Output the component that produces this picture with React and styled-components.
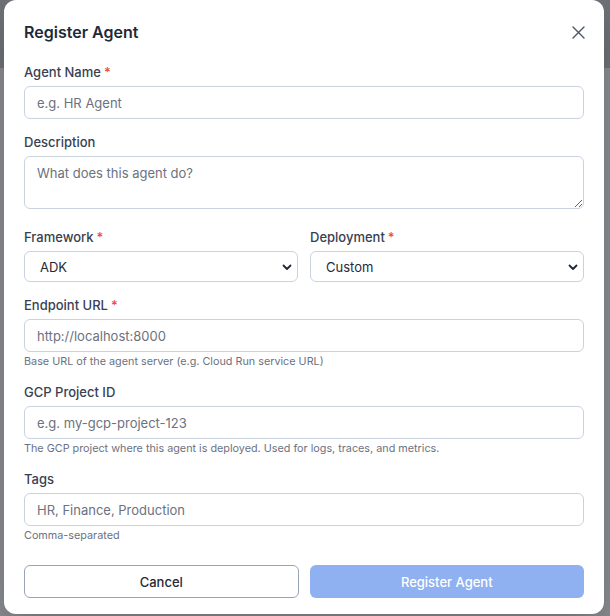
import React from "react";
import styled, { createGlobalStyle } from "styled-components";

const GlobalStyle = createGlobalStyle`
  * { box-sizing: border-box; }
  html, body { margin: 0; padding: 0; }
  body {
    font-family: Inter, "Noto Sans", "Liberation Sans", sans-serif;
    -webkit-font-smoothing: antialiased;
    overflow: hidden;
  }
`;

const Backdrop = styled.div`
  position: fixed;
  inset: 0;
  background: linear-gradient(to bottom, #6e7176 0, #6e7176 68px, #8a8d91 68px);
  display: flex;
  align-items: flex-start;
  padding-left: 4px;
`;

const Modal = styled.div`
  width: 600px;
  background: #ffffff;
  border-radius: 12px;
  box-shadow: 0 20px 40px rgba(0, 0, 0, 0.2);
  padding: 20px 20px 16px;
`;

const Header = styled.div`
  display: flex;
  align-items: center;
  justify-content: space-between;
  height: 24px;
  margin-bottom: 20px;
`;

const Title = styled.h2`
  margin: 0;
  font-size: 16px;
  line-height: 24px;
  font-weight: 600;
  color: #1f2937;
`;

const CloseButton = styled.button`
  border: 0;
  background: none;
  padding: 0;
  margin-right: -1px;
  width: 13px;
  height: 13px;
  display: flex;
  color: #4b5563;
  cursor: pointer;
`;

const Form = styled.form`
  display: flex;
  flex-direction: column;
  gap: 15px;
`;

const Row = styled.div`
  display: grid;
  grid-template-columns: 1fr 1fr;
  gap: 12px;
`;

const Field = styled.div`
  display: flex;
  flex-direction: column;
  min-width: 0;
`;

const Label = styled.label`
  font-size: 13px;
  line-height: 16px;
  font-weight: 500;
  color: #374151;
  margin-bottom: 6px;
`;

const Required = styled.span`
  color: #ef4444;
  margin-left: 3px;
`;

const Input = styled.input`
  display: block;
  width: 100%;
  height: 33px;
  border: 1px solid #c9d3e0;
  border-radius: 6px;
  padding: 0 12px;
  font-family: inherit;
  font-size: 13px;
  color: #1f2937;
  background: #fff;
  outline: none;
  &::placeholder { color: #6b7280; }
`;

const TextArea = styled.textarea`
  display: block;
  width: 100%;
  height: 53px;
  border: 1px solid #c9d3e0;
  border-radius: 6px;
  padding: 7px 12px;
  font-family: inherit;
  font-size: 13px;
  line-height: 18px;
  color: #1f2937;
  margin-bottom: 5px;
  resize: vertical;
  outline: none;
  &::placeholder { color: #6b7280; }
`;

const SelectWrap = styled.div`
  position: relative;
`;

const Select = styled.select`
  display: block;
  width: 100%;
  height: 31px;
  appearance: none;
  -webkit-appearance: none;
  border: 1px solid #c9d3e0;
  border-radius: 6px;
  padding: 0 30px 0 15px;
  font-family: inherit;
  font-size: 13px;
  color: #1f2937;
  background: #fff;
  outline: none;
`;

const Chevron = styled.svg`
  position: absolute;
  right: 5px;
  top: 50%;
  transform: translateY(-50%);
  pointer-events: none;
`;

const Help = styled.p`
  margin: 3px 0 0;
  font-size: 10.8px;
  line-height: 14px;
  color: #6b7280;
`;

const Footer = styled.div`
  display: grid;
  grid-template-columns: 1fr 1fr;
  gap: 11px;
  margin-top: 22px;
`;

const Button = styled.button`
  height: 33px;
  border-radius: 6px;
  font-family: inherit;
  font-size: 13px;
  font-weight: 500;
  cursor: pointer;
  border: 1px solid ${(p) => (p.$primary ? "transparent" : "#97a3b6")};
  background: ${(p) => (p.$primary ? "#8fb0f1" : "#ffffff")};
  color: ${(p) => (p.$primary ? "#ffffff" : "#1f2937")};
`;

const SelectField = ({ label, value, options }) => (
  <Field>
    <Label>
      {label}
      <Required>*</Required>
    </Label>
    <SelectWrap>
      <Select defaultValue={value}>
        {options.map((o) => (
          <option key={o}>{o}</option>
        ))}
      </Select>
      <Chevron width="12" height="12" viewBox="0 0 12 12" fill="none">
        <path d="M2.5 4.5 L6 8 L9.5 4.5" stroke="#1f2937" strokeWidth="1.8" strokeLinecap="round" strokeLinejoin="round" />
      </Chevron>
    </SelectWrap>
  </Field>
);

export default function App() {
  return (
    <>
      <GlobalStyle />
      <Backdrop>
        <Modal>
          <Header>
            <Title>Register Agent</Title>
            <CloseButton type="button" aria-label="Close">
              <svg width="13" height="13" viewBox="0 0 13 13" fill="none">
                <path d="M1 1 L12 12 M12 1 L1 12" stroke="currentColor" strokeWidth="1.4" strokeLinecap="round" />
              </svg>
            </CloseButton>
          </Header>
          <Form onSubmit={(e) => e.preventDefault()}>
            <Field>
              <Label>
                Agent Name<Required>*</Required>
              </Label>
              <Input placeholder="e.g. HR Agent" />
            </Field>
            <Field>
              <Label>Description</Label>
              <TextArea placeholder="What does this agent do?" />
            </Field>
            <Row>
              <SelectField label="Framework" value="ADK" options={["ADK", "LangGraph", "CrewAI", "Other"]} />
              <SelectField label="Deployment" value="Custom" options={["Cloud Run", "Agent Engine", "GKE", "Custom"]} />
            </Row>
            <Field>
              <Label>
                Endpoint URL<Required>*</Required>
              </Label>
              <Input placeholder="http://localhost:8000" />
              <Help>Base URL of the agent server (e.g. Cloud Run service URL)</Help>
            </Field>
            <Field>
              <Label>GCP Project ID</Label>
              <Input placeholder="e.g. my-gcp-project-123" />
              <Help>The GCP project where this agent is deployed. Used for logs, traces, and metrics.</Help>
            </Field>
            <Field>
              <Label>Tags</Label>
              <Input placeholder="HR, Finance, Production" />
              <Help>Comma-separated</Help>
            </Field>
          </Form>
          <Footer>
            <Button type="button">Cancel</Button>
            <Button type="button" $primary>
              Register Agent
            </Button>
          </Footer>
        </Modal>
      </Backdrop>
    </>
  );
}
